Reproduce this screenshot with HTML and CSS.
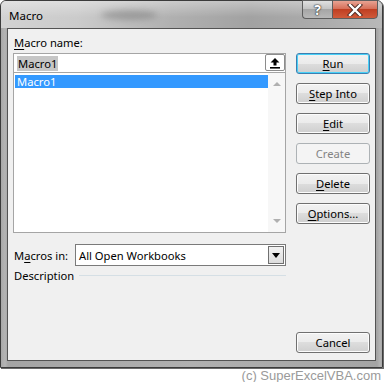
FILE: index.html
```html
<!DOCTYPE html>
<html lang="en">
<head>
    <meta charset="UTF-8">
    <title>Macro</title>
    <link rel="stylesheet" href="styles.css">
</head>
<body>
    <div class="window">
        <!-- Barra de titulo -->
        <div class="titlebar">
            <span class="title">Macro</span>
            <span class="smudge"></span>
            <div class="caption-buttons">
                <div class="cap-btn help">?</div>
                <div class="cap-btn close">
                    <svg width="16" height="12" viewBox="0 0 16 12">
                        <path d="M3 1 L13 11 M13 1 L3 11" stroke="#4a2a24" stroke-width="4.2" stroke-linecap="square"/>
                        <path d="M3 1 L13 11 M13 1 L3 11" stroke="#ffffff" stroke-width="2.4" stroke-linecap="square"/>
                    </svg>
                </div>
            </div>
        </div>

        <div class="client">
            <div class="main">
                <div class="label"><u>M</u>acro name:</div>
                <div class="name-box">
                    <span class="sel-text">Macro1</span>
                    <div class="collapse-btn">
                        <svg width="12" height="12" viewBox="0 0 12 12">
                            <path d="M6 1 L10.5 5.5 H7.5 V8.5 H4.5 V5.5 H1.5 Z" fill="#000"/>
                            <rect x="1" y="10" width="10" height="1.6" fill="#000"/>
                        </svg>
                    </div>
                </div>
                <div class="listbox">
                    <div class="items">
                        <div class="item selected">Macro1</div>
                    </div>
                    <div class="scrollbar">
                        <span class="arrow up"></span>
                        <span class="arrow down"></span>
                    </div>
                </div>

                <div class="macros-in">
                    <span class="label-in">M<u>a</u>cros in:</span>
                    <div class="combo">
                        <span>All Open Workbooks</span>
                        <div class="combo-btn"><span class="tri"></span></div>
                    </div>
                </div>

                <div class="description">
                    <span>Description</span>
                    <span class="rule"></span>
                </div>
            </div>

            <div class="buttons">
                <button class="btn default"><u>R</u>un</button>
                <button class="btn"><u>S</u>tep Into</button>
                <button class="btn"><u>E</u>dit</button>
                <button class="btn" disabled>Create</button>
                <button class="btn"><u>D</u>elete</button>
                <button class="btn"><u>O</u>ptions...</button>
                <button class="btn cancel">Cancel</button>
            </div>
        </div>
    </div>
    <div class="watermark">(c) SuperExcelVBA.com</div>
</body>
</html>
```

FILE: styles.css
```css
body {
    margin: 0;
    background: #ffffff;
    font-family: "Noto Sans", "Open Sans", sans-serif;
    font-size: 11.2px;
    color: #000;
}
* {
    box-sizing: border-box;
}
u {
    text-decoration-thickness: 1px;
    text-underline-offset: 2px;
}
.window {
    width: 383px;
    height: 368px;
    border: 1px solid #3b3b3b;
    border-radius: 6px 6px 0 0;
    background: linear-gradient(to right, #a8a8a8 0, #b4b4b4 4px, #a4a4a4 7px, #b0b0b0 50%, #a4a4a4 376px, #b4b4b4 379px, #a8a8a8 100%);
    display: flex;
    flex-direction: column;
    box-shadow: 1px 1px 0 #6a6a6a;
}
.titlebar {
    height: 27px;
    position: relative;
    display: flex;
    align-items: center;
    border-radius: 5px 5px 0 0;
    background:
        linear-gradient(to bottom, rgba(255,255,255,0.35), rgba(255,255,255,0) 60%),
        linear-gradient(to right, #d2d2d2 0, #cbcbcb 20%, #b0b0b0 45%, #a2a2a2 65%, #acacac 85%, #b8b8b8 100%);
}
.title {
    margin-left: 8px;
    margin-top: 2px;
    font-size: 11.5px;
}
.smudge {
    position: absolute;
    left: 100px;
    top: 9px;
    width: 56px;
    height: 10px;
    border-radius: 50%;
    background: rgba(90, 90, 90, 0.35);
    filter: blur(3px);
}
.caption-buttons {
    position: absolute;
    right: 4px;
    top: -1px;
    display: flex;
}
.cap-btn {
    height: 19px;
    border: 1px solid #5e5e5e;
    display: flex;
    align-items: center;
    justify-content: center;
}
.help {
    width: 30px;
    border-radius: 0 0 0 4px;
    border-right: none;
    background: linear-gradient(to bottom, #e0e0e0 0, #c4c4c4 45%, #a6a6a6 50%, #b8b8b8 100%);
    color: #fff;
    font-weight: bold;
    font-size: 14px;
    text-shadow: 0 0 1px #333, 0 0 1px #333, 0 0 2px #444;
}
.close {
    width: 46px;
    border-radius: 0 0 4px 0;
    background: linear-gradient(to bottom, #e8a393 0, #d7705a 45%, #c03f22 50%, #d05a3a 100%);
}
.client {
    flex: 1;
    margin: 0 6px 6px 6px;
    border: 1px solid #535353;
    background: #f0f0f0;
    display: flex;
    padding: 0 4px 7px 5px;
}
.main {
    width: 273px;
    display: flex;
    flex-direction: column;
}
.label {
    height: 24px;
    padding: 6px 0 0 1px;
    line-height: 16px;
}
.name-box {
    height: 20px;
    border: 1px solid #a5a5a5;
    background: #fff;
    display: flex;
    align-items: center;
    padding-left: 3px;
    position: relative;
}
.sel-text {
    background: #c6c6c6;
    line-height: 15px;
    padding: 0 1px;
}
.collapse-btn {
    position: absolute;
    right: 0;
    top: 0;
    width: 20px;
    height: 17px;
    border: 1px solid #8c8c8c;
    border-radius: 2px;
    background: #fff;
    display: flex;
    align-items: center;
    justify-content: center;
}
.listbox {
    height: 161px;
    margin-top: -1px;
    border: 1px solid #a5a5a5;
    background: #fff;
    display: flex;
}
.items {
    flex: 1;
    padding: 2px 0 0 1px;
}
.item {
    height: 13px;
    line-height: 13px;
    padding-left: 2px;
}
.item.selected {
    background: #3399ff;
    color: #fff;
}
.scrollbar {
    width: 17px;
    background: #f7f7f7;
    display: flex;
    flex-direction: column;
    justify-content: space-between;
    align-items: center;
    padding: 9px 0 9px;
}
.arrow {
    width: 0;
    height: 0;
    border-left: 4px solid transparent;
    border-right: 4px solid transparent;
}
.arrow.up {
    border-bottom: 4px solid #b0b0b0;
}
.arrow.down {
    border-top: 4px solid #b0b0b0;
}
.macros-in {
    margin-top: 11px;
    display: flex;
    align-items: center;
}
.label-in {
    width: 62px;
    padding-left: 1px;
}
.combo {
    flex: 1;
    height: 22px;
    border: 1px solid #7a7a7a;
    background: #fff;
    display: flex;
    align-items: center;
    padding-left: 3px;
    position: relative;
}
.combo-btn {
    position: absolute;
    right: 1px;
    top: 1px;
    width: 16px;
    height: 18px;
    border: 1px solid #707070;
    background: linear-gradient(to bottom, #f2f2f2, #dcdcdc);
    display: flex;
    align-items: center;
    justify-content: center;
}
.tri {
    border-left: 4px solid transparent;
    border-right: 4px solid transparent;
    border-top: 5px solid #000;
}
.description {
    margin-top: 2px;
    display: flex;
    align-items: center;
    padding-left: 1px;
}
.rule {
    flex: 1;
    margin-left: 5px;
    border-top: 1px solid #d5dfe5;
}
.buttons {
    margin-left: 10px;
    width: 74px;
    padding-top: 24px;
    display: flex;
    flex-direction: column;
    gap: 9px;
}
.btn {
    height: 21px;
    font-family: "Noto Sans", "Open Sans", sans-serif;
    font-size: 11.2px;
    color: #000;
    border: 1px solid #707070;
    border-radius: 3px;
    background: linear-gradient(to bottom, #f2f2f2 0, #ebebeb 50%, #dddddd 50%, #cfcfcf 100%);
    box-shadow: inset 0 0 0 1px #fcfcfc;
    padding: 0;
}
.btn.default {
    border-color: #3c7fb1;
    box-shadow: inset 0 0 0 1px #48d0f7;
}
.btn:disabled {
    border-color: #adb2b5;
    background: #f4f4f4;
    color: #838383;
    box-shadow: none;
}
.btn.cancel {
    margin-top: auto;
}
.watermark {
    text-align: right;
    padding-right: 5px;
    font-family: "Liberation Sans", Arial, sans-serif;
    font-size: 13px;
    color: #9a9a9a;
}
```
